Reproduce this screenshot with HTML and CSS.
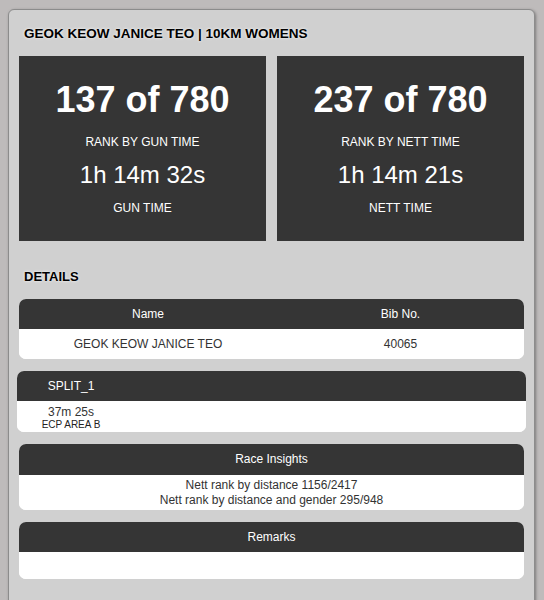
FILE: index.html
```html
<!DOCTYPE html>
<html lang="en">
<head>
    <meta charset="UTF-8">
    <meta name="viewport" content="width=device-width, initial-scale=1.0">
    <title>Result - GEOK KEOW JANICE TEO</title>
    <link rel="stylesheet" href="styles.css">
</head>
<body>
    <div class="card">
        <!-- Runner Title -->
        <h1 class="runner-title">GEOK KEOW JANICE TEO | 10KM WOMENS</h1>

        <!-- Rank Boxes -->
        <div class="stats">
            <div class="stat-box">
                <div class="stat-rank">137 of 780</div>
                <div class="stat-label">RANK BY GUN TIME</div>
                <div class="stat-time">1h 14m 32s</div>
                <div class="stat-label">GUN TIME</div>
            </div>
            <div class="stat-box">
                <div class="stat-rank">237 of 780</div>
                <div class="stat-label">RANK BY NETT TIME</div>
                <div class="stat-time">1h 14m 21s</div>
                <div class="stat-label">NETT TIME</div>
            </div>
        </div>

        <h2 class="section-title">DETAILS</h2>

        <!-- Name / Bib -->
        <div class="panel">
            <div class="panel-head two-col">
                <div>Name</div>
                <div>Bib No.</div>
            </div>
            <div class="panel-body two-col detail-row">
                <div>GEOK KEOW JANICE TEO</div>
                <div>40065</div>
            </div>
        </div>

        <!-- Splits -->
        <div class="panel split-panel">
            <div class="panel-head split-col">
                <div>SPLIT_1</div>
            </div>
            <div class="panel-body split-col split-body">
                <div>
                    <div class="split-time">37m 25s</div>
                    <div class="split-place">ECP AREA B</div>
                </div>
            </div>
        </div>

        <!-- Race Insights -->
        <div class="panel">
            <div class="panel-head insights-head">Race Insights</div>
            <div class="panel-body insights-body">
                <div>Nett rank by distance 1156/2417</div>
                <div>Nett rank by distance and gender 295/948</div>
            </div>
        </div>

        <!-- Remarks -->
        <div class="panel">
            <div class="panel-head remarks-head">Remarks</div>
            <div class="panel-body remarks-body"></div>
        </div>
    </div>
</body>
</html>
```

FILE: styles.css
```css
/* General Styles */
body {
    margin: 0;
    padding: 0;
    background: #bebbbb;
    font-family: "Liberation Sans", Arial, sans-serif;
    color: #333;
}

/* Main Card */
.card {
    margin: 9px 9px 0 8px;
    padding: 16px 10px 40px;
    background: #d0d0d0;
    border: 1px solid #8c8c8c;
    border-radius: 6px;
    box-shadow: 1px 1px 3px rgba(0, 0, 0, 0.35);
}

.runner-title {
    margin: 0 0 14px;
    padding-left: 5px;
    font-size: 13.5px;
    line-height: 16px;
    font-weight: bold;
    color: #000;
    text-shadow: 0 0 3px #fff;
}

/* Rank Boxes */
.stats {
    display: grid;
    grid-template-columns: 1fr 1fr;
    gap: 11px;
}

.stat-box {
    background: #353535;
    color: #fff;
    text-align: center;
    padding: 24px 0 25px;
}

.stat-rank {
    font-size: 36px;
    line-height: 40px;
    font-weight: bold;
}

.stat-label {
    font-size: 12px;
    line-height: 16px;
    margin-top: 14px;
}

.stat-time {
    font-size: 24px;
    line-height: 28px;
    margin-top: 11px;
}

.stat-time + .stat-label {
    margin-top: 11px;
}

/* Details */
.section-title {
    margin: 28px 0 14px;
    padding-left: 5px;
    font-size: 13px;
    line-height: 16px;
    font-weight: bold;
    color: #000;
    text-shadow: 0 0 3px #fff;
}

.panel {
    border-radius: 7px;
    overflow: hidden;
    margin-bottom: 12px;
    background: #fff;
}

.panel-head {
    background: #353535;
    color: #fff;
    font-size: 12px;
    line-height: 30px;
    text-align: center;
}

.panel-body {
    background: #fff;
    font-size: 12px;
    text-align: center;
    color: #333;
}

.two-col {
    display: grid;
    grid-template-columns: 258px 1fr;
}

.detail-row {
    line-height: 30px;
}

/* Splits */
.split-panel {
    margin-left: -2px;
    margin-right: -2px;
}

.split-col {
    display: grid;
    grid-template-columns: 108px 1fr;
}

.split-body {
    padding: 4px 0 1px;
}

.split-time {
    font-size: 12px;
    line-height: 14px;
}

.split-place {
    font-size: 10px;
    line-height: 12px;
    color: #222;
}

/* Race Insights */
.insights-head {
    line-height: 31px;
}

.insights-body {
    padding: 3px 0 2px;
    line-height: 15px;
}

.remarks-body {
    height: 27px;
}
```
